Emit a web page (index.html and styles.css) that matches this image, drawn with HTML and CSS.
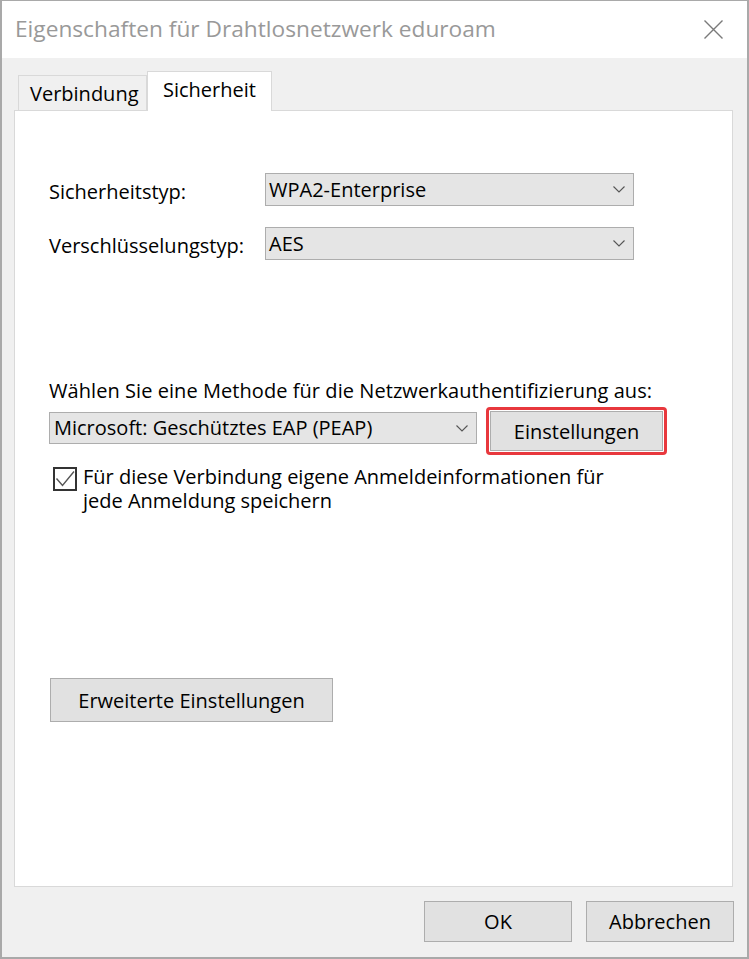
FILE: index.html
```html
<!DOCTYPE html>
<html lang="de">
<head>
  <meta charset="UTF-8">
  <meta name="viewport" content="width=device-width, initial-scale=1.0">
  <title>Eigenschaften für Drahtlosnetzwerk eduroam</title>
  <link rel="stylesheet" href="styles.css">
</head>
<body>
  <div class="window">
    <div class="titlebar">
      <span class="title">Eigenschaften für Drahtlosnetzwerk eduroam</span>
      <svg class="close" width="19" height="19" viewBox="0 0 19 19">
        <path d="M0.5 0.5 L18.5 18.5 M18.5 0.5 L0.5 18.5" stroke="#7a7a7a" stroke-width="1.4" fill="none"/>
      </svg>
    </div>

    <div class="client">
      <div class="tabs">
        <div class="tab tab-conn">Verbindung</div>
        <div class="tab tab-sec active">Sicherheit</div>
      </div>

      <div class="panel">
        <div class="field-row">
          <span class="field-label">Sicherheitstyp:</span>
          <div class="combo combo-wide">
            <span>WPA2-Enterprise</span>
            <svg class="chevron" width="12" height="7" viewBox="0 0 12 7"><polyline points="0.5,0.5 6,6 11.5,0.5" fill="none" stroke="#555" stroke-width="1.1"/></svg>
          </div>
        </div>
        <div class="field-row second">
          <span class="field-label">Verschlüsselungstyp:</span>
          <div class="combo combo-wide">
            <span>AES</span>
            <svg class="chevron" width="12" height="7" viewBox="0 0 12 7"><polyline points="0.5,0.5 6,6 11.5,0.5" fill="none" stroke="#555" stroke-width="1.1"/></svg>
          </div>
        </div>

        <div class="auth-label">Wählen Sie eine Methode für die Netzwerkauthentifizierung aus:</div>
        <div class="auth-row">
          <div class="combo combo-method">
            <span>Microsoft: Geschütztes EAP (PEAP)</span>
            <svg class="chevron" width="12" height="7" viewBox="0 0 12 7"><polyline points="0.5,0.5 6,6 11.5,0.5" fill="none" stroke="#555" stroke-width="1.1"/></svg>
          </div>
          <div class="highlight">
            <button class="btn btn-settings">Einstellungen</button>
          </div>
        </div>

        <div class="check-row">
          <span class="checkbox">
            <svg width="20" height="20" viewBox="0 0 20 20"><polyline points="1.5,9.5 7.5,16.5 19,2.5" fill="none" stroke="#555" stroke-width="1.4"/></svg>
          </span>
          <span class="check-text">Für diese Verbindung eigene Anmeldeinformationen für<br>jede Anmeldung speichern</span>
        </div>

        <button class="btn btn-advanced">Erweiterte Einstellungen</button>
      </div>

      <div class="footer">
        <button class="btn btn-dialog">OK</button>
        <button class="btn btn-dialog">Abbrechen</button>
      </div>
    </div>
  </div>
</body>
</html>
```

FILE: styles.css
```css
body {
  margin: 0;
  font-family: 'Segoe UI', 'Open Sans', sans-serif;
  font-size: 20px;
  line-height: 24px;
  color: #000;
  background: #f0f0f0;
}
.window {
  width: 749px;
  height: 959px;
  box-sizing: border-box;
  border: 2px solid #a9a9a9;
  border-top-width: 1px;
  display: flex;
  flex-direction: column;
  overflow: hidden;
}

/* titelzeile */
.titlebar {
  height: 57px;
  flex: none;
  background: #fff;
  display: flex;
  align-items: center;
  padding-left: 13px;
}
.title { font-size: 22.7px; color: #999; margin-top: -1px; }
.close { margin-left: auto; margin-right: 24px; }

.client {
  flex: 1;
  display: flex;
  flex-direction: column;
  padding: 0 13px 0 12px;
  background: #f0f0f0;
}

/* reiter */
.tabs {
  display: flex;
  align-items: flex-end;
  margin-top: 13px;
  padding-left: 4px;
}
.tab {
  box-sizing: border-box;
  border: 1px solid #d9d9d9;
  border-bottom: none;
  padding-top: 6px;
}
.tab-conn { width: 129px; height: 35px; padding-left: 11px; background: #f0f0f0; }
.tab-sec { width: 125px; height: 40px; padding-left: 15px; }
.tab.active {
  background: #fff;
  margin-bottom: -1px;
  position: relative;
  z-index: 1;
}

.panel {
  flex: 1;
  background: #fff;
  border: 1px solid #d9d9d9;
  margin-right: 1px;
  padding: 62px 0 0 34px;
}

/* felder */
.field-row { display: flex; align-items: center; height: 33px; }
.field-row.second { margin-top: 21px; }
.field-label { width: 216px; padding-top: 5px; }
.combo {
  box-sizing: border-box;
  display: flex;
  align-items: center;
  background: #e5e5e5;
  border: 1px solid #adadad;
  padding-left: 3px;
}
.combo-wide { width: 369px; height: 33px; }
.combo-method { width: 428px; height: 32px; margin-top: 5px; padding-left: 4px; }
.chevron { margin-left: auto; margin-right: 8px; }

.auth-label { margin-top: 119px; letter-spacing: 0.06px; }
.auth-row { display: flex; align-items: flex-start; margin-top: 4px; }
.highlight {
  margin-left: 9px;
  padding: 1px;
  border: 3px solid #e8383d;
  border-radius: 4px;
}

.btn {
  box-sizing: border-box;
  font-family: inherit;
  font-size: 20px;
  color: #000;
  background: #e1e1e1;
  border: 1px solid #adadad;
  padding: 0;
  display: block;
}
.btn-settings { width: 173px; height: 40px; }

.check-row { display: flex; align-items: flex-start; margin-top: 12px; }
.checkbox {
  box-sizing: border-box;
  flex: none;
  width: 24px;
  height: 24px;
  margin-left: 4px;
  border: 2px solid #333;
  display: flex;
  align-items: center;
  justify-content: center;
}
.check-text { margin-left: 6px; margin-top: -2px; line-height: 24px; }

.btn-advanced { width: 283px; height: 44px; margin: 165px 0 0 1px; }

/* untere knoepfe */
.footer {
  display: flex;
  justify-content: flex-end;
  gap: 14px;
  padding: 14px 0 15px;
}
.btn-dialog { width: 148px; height: 41px; }
```
